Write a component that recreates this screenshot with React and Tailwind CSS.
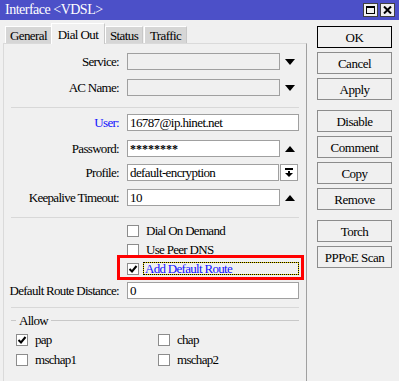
import React from 'react';

const font = { fontFamily: '"Liberation Serif", "Times New Roman", serif' };

// small triangle used beside the combo fields
const Tri = ({ up = false }) => (
  <svg width="10" height="6" viewBox="0 0 10 6" className="block">
    {up ? <path d="M5 0 L10 6 L0 6 Z" fill="#000" /> : <path d="M0 0 L10 0 L5 6 Z" fill="#000" />}
  </svg>
);

const Check = () => (
  <svg width="10" height="10" viewBox="0 0 10 10" className="block">
    <path d="M1.5 5 L4 7.5 L8.5 2" stroke="#000" strokeWidth="2" fill="none" />
  </svg>
);

const Box = ({ checked }) => (
  <span className="w-[12px] h-[12px] border border-[#8c8c8c] bg-white flex items-center justify-center shrink-0">
    {checked && <Check />}
  </span>
);

const Label = ({ children, blue }) => (
  <div className={`w-[115px] text-right text-[13px] tracking-[-0.7px] leading-none whitespace-nowrap ${blue ? 'text-[#1010ff]' : 'text-black'}`}>
    {children}
  </div>
);

const Row = ({ label, blue, value, disabled, wide, after, className = '' }) => (
  <div className={`flex items-center h-[17px] gap-[8px] ${className}`}>
    <Label blue={blue}>{label}</Label>
    <div
      className={`h-[17px] border border-[#a0a0a0] flex items-center px-[2px] text-[13px] tracking-[-0.6px] leading-none ${
        disabled ? 'bg-[#f0f0f0]' : 'bg-white'
      } ${wide ? 'w-[172px]' : 'w-[153px]'}`}
    >
      {value}
    </div>
    {after}
  </div>
);

const Sep = ({ className = '' }) => <div className={`ml-[7px] w-[288px] h-[1px] bg-[#d8d8d8] ${className}`} />;

const Btn = ({ children, primary, className = '' }) => (
  <button
    className={`w-[75px] h-[22px] bg-[#f0f0f0] text-[13px] tracking-[-0.5px] text-black leading-none flex items-center justify-center ${
      primary ? 'border border-black' : 'border border-[#8c8c8c]'
    } ${className}`}
  >
    {children}
  </button>
);

const txt = 'text-[13px] leading-none tracking-[-0.7px]';

export default function App() {
  return (
    <div className="w-[399px] h-[381px] overflow-hidden bg-[#f0f0f0] flex flex-col" style={font}>
      {/* title bar */}
      <div className="h-[20px] bg-[#4c50c8] flex items-center pl-[5px] pr-[4px] shrink-0">
        <span className="text-white text-[14px] leading-none tracking-[-0.5px]">Interface &lt;VDSL&gt;</span>
        <div className="ml-auto flex gap-[2px]">
          <span className="w-[15px] h-[14px] bg-[#f0f0f0] border border-[#404040] flex items-center justify-center">
            <span className="w-[9px] h-[8px] border border-black border-t-2" />
          </span>
          <span className="w-[15px] h-[14px] bg-[#f0f0f0] border border-[#404040] flex items-center justify-center">
            <svg width="9" height="8" viewBox="0 0 9 8" className="block">
              <path d="M1 0.5 L8 7.5 M8 0.5 L1 7.5" stroke="#000" strokeWidth="2" />
            </svg>
          </span>
        </div>
      </div>

      <div className="flex flex-1">
        {/* left side: tabs + panel */}
        <div className="flex flex-col w-[307px]">
          <div className="h-[23px] flex items-end pl-[5px] text-[13px] leading-none tracking-[-0.6px]">
            <div className="w-[46px] h-[17px] bg-[#d6d6d6] border-l border-t border-white flex items-center justify-center">General</div>
            <div className="w-[54px] h-[21px] -mb-[1px] bg-[#f0f0f0] border-l border-t border-r border-white border-r-[#c8c8c8] flex items-center justify-center relative z-10">
              Dial Out
            </div>
            <div className="w-[38px] h-[17px] bg-[#d6d6d6] border-l border-t border-white border-r border-r-[#c8c8c8] flex items-center justify-center">Status</div>
            <div className="ml-[1px] w-[43px] h-[17px] bg-[#d6d6d6] border-l border-t border-white border-r border-r-[#c8c8c8] flex items-center justify-center">Traffic</div>
          </div>

          <div className="ml-[3px] flex-1 border-t border-l border-[#dadada] border-r border-r-[#a0a0a0] flex flex-col text-black">
            <Row label="Service:" disabled value="" className="mt-[9px]" after={<span className="ml-[-4px] pl-[1px]"><Tri /></span>} />
            <Row label="AC Name:" disabled value="" className="mt-[9px]" after={<span className="ml-[-4px] pl-[1px]"><Tri /></span>} />
            <Sep className="mt-[11px]" />
            <Row label="User:" blue value="16787@ip.hinet.net" wide className="mt-[6px]" />
            <Row label="Password:" value={<span className="font-bold tracking-[0px] text-[12px]">********</span>} className="mt-[9px]" after={<span className="ml-[-4px] pl-[1px]"><Tri up /></span>} />
            <div className="flex items-center h-[17px] gap-[8px] mt-[7px]">
              <Label>Profile:</Label>
              <div className="w-[152px] h-[17px] border border-[#a0a0a0] bg-white flex items-center px-[2px] text-[13px] tracking-[-0.6px] leading-none">
                default-encryption
              </div>
              <div className="-ml-[7px] w-[18px] h-[17px] border border-[#a0a0a0] bg-white flex items-center justify-center">
                <svg width="8" height="9" viewBox="0 0 8 9" className="block">
                  <rect x="0" y="0" width="8" height="2" fill="#000" />
                  <rect x="3" y="3" width="2" height="2" fill="#000" />
                  <path d="M0 5 L8 5 L4 9 Z" fill="#000" />
                </svg>
              </div>
            </div>
            <Row label="Keepalive Timeout:" value="10" className="mt-[8px]" after={<span className="ml-[-4px] pl-[1px]"><Tri up /></span>} />
            <Sep className="mt-[11px]" />

            <div className={`mt-[6px] ml-[123px] h-[13px] flex items-center gap-[7px] ${txt}`}>
              <Box /> <span>Dial On Demand</span>
            </div>
            <div className={`mt-[6px] ml-[123px] h-[13px] flex items-center gap-[7px] ${txt}`}>
              <Box /> <span>Use Peer DNS</span>
            </div>
            <div className={`mt-[6px] ml-[123px] h-[13px] flex items-center gap-[4px] relative ${txt}`}>
              {/* red highlight box drawn over the row */}
              <span className="absolute left-[-10px] top-[-7px] w-[187px] h-[25px] border-[3px] border-[#ff0000] pointer-events-none" />
              <Box checked />
              <span className="bg-[#e8d000] w-[156px] h-[13px] flex">
                <span className="flex-1 border border-dotted border-black bg-[#f0f0f0] bg-clip-padding text-[#1010ff] flex items-center pl-[1px]">
                  Add Default Route
                </span>
              </span>
            </div>
            <Row label="Default Route Distance:" value="0" wide className="mt-[7px]" />
            <Sep className="mt-[8px]" />

            <div className={`mt-[5px] h-[14px] flex items-center ${txt}`}>
              <span className="ml-[7px] w-[5px] h-[1px] bg-[#c8c8c8]" />
              <span className="px-[3px]">Allow</span>
              <span className="w-[248px] h-[1px] bg-[#c8c8c8]" />
            </div>
            <div className={`mt-[6px] ml-[12px] grid grid-cols-[142px_142px] gap-y-[7px] ${txt}`}>
              <div className="h-[13px] flex items-center gap-[7px]"><Box checked /><span>pap</span></div>
              <div className="h-[13px] flex items-center gap-[7px]"><Box /><span>chap</span></div>
              <div className="h-[13px] flex items-center gap-[7px]"><Box /><span>mschap1</span></div>
              <div className="h-[13px] flex items-center gap-[7px]"><Box /><span>mschap2</span></div>
            </div>
          </div>
        </div>

        {/* right side buttons */}
        <div className="ml-[10px] mt-[6px] flex flex-col">
          <Btn primary>OK</Btn>
          <Btn className="mt-[4px]">Cancel</Btn>
          <Btn className="mt-[4px]">Apply</Btn>
          <Btn className="mt-[10px]">Disable</Btn>
          <Btn className="mt-[4px]">Comment</Btn>
          <Btn className="mt-[4px]">Copy</Btn>
          <Btn className="mt-[4px]">Remove</Btn>
          <Btn className="mt-[10px]">Torch</Btn>
          <Btn className="mt-[4px]">PPPoE Scan</Btn>
        </div>
      </div>
    </div>
  );
}
